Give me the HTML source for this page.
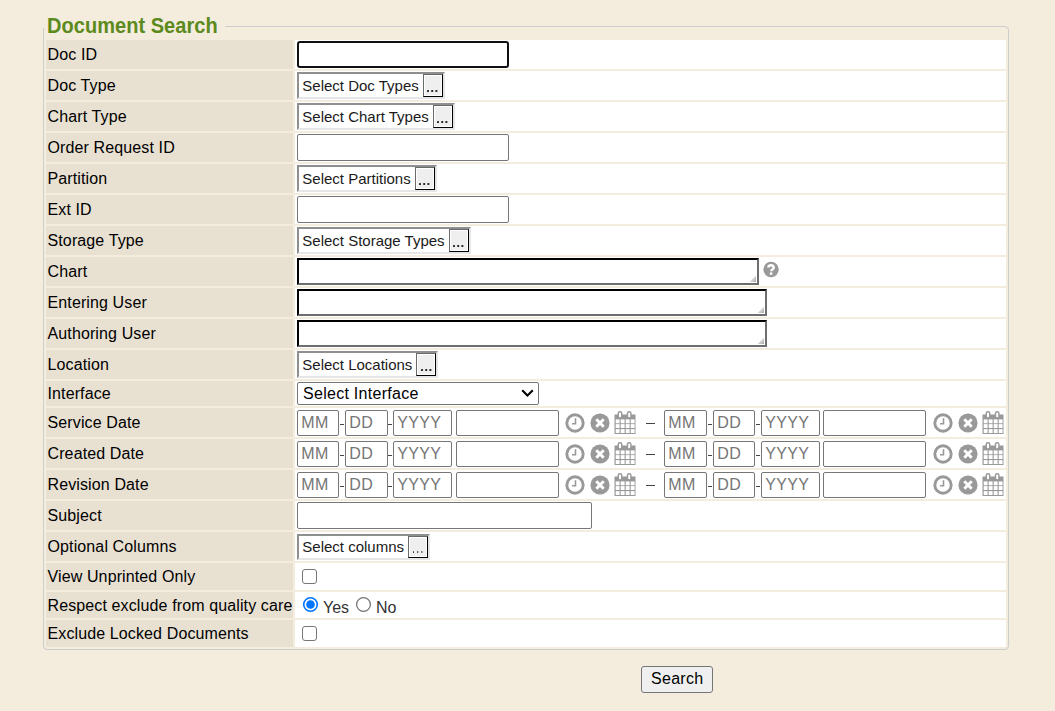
<!DOCTYPE html><html><head><meta charset="utf-8"><title>Document Search</title><style>
*{box-sizing:border-box;margin:0;padding:0}
html,body{width:1055px;height:711px;overflow:hidden;background:#f4ecdd;font-family:"Liberation Sans",sans-serif;font-size:16px;color:#000}
.a{position:absolute}
.fs{position:absolute;left:43px;top:26px;width:966px;height:624px;border:1px solid #cdcdcd;border-radius:4px}
.lgcover{position:absolute;left:41px;top:18px;width:184px;height:10px;background:#f4ecdd}
.lg{position:absolute;left:47px;top:15px;font-size:20px;font-weight:bold;color:#5c8a1c;line-height:23px;white-space:nowrap;letter-spacing:0.04px;transform:scaleY(1.06);transform-origin:0 18.4px}
.lc{position:absolute;left:46px;width:247px;background:#e8e1d2;white-space:nowrap;padding-left:1.5px;letter-spacing:0.12px}
.vc{position:absolute;left:295px;width:711px;background:#fff}
.inp{position:absolute;left:297px;height:27px;border:1px solid #767676;border-radius:2px;background:#fff}
.foc{border:2px solid #101010;border-radius:3px}
.sb{position:absolute;left:297px;height:27px;border:2px solid;border-color:#8f8f8f #e6e6e6 #e6e6e6 #8f8f8f;background:#fff;font-size:15px;line-height:23px;padding-left:3.3px;white-space:nowrap;color:#1a1a1a}
.sb span{display:inline-block;vertical-align:top}
.btn{position:absolute;top:0px;right:0px;width:20px;height:23px;background:#efefef;border:1px solid;border-color:#6a6a6a #000 #000 #6a6a6a;box-shadow:inset 0 0 0 1px #fff}
.dots{position:absolute;left:3.6px;width:1.8px;height:1.8px;background:#2a2a2a;border-radius:0.5px;box-shadow:4.2px 0 #2a2a2a,8.4px 0 #2a2a2a}
.ta{position:absolute;left:297px;height:27px;border:2px solid;border-color:#000 #6e6e6e #6e6e6e #000;background:#fff}
.grip{position:absolute;right:1px;bottom:1px;width:6px;height:6px;background:linear-gradient(135deg,transparent 49%,#d8d8d8 50%,#a8a8a8 100%)}
.sel{position:absolute;left:297px;top:382px;width:242px;height:23px;border:1px solid #767676;border-radius:2px;background:#fff;line-height:21px;padding-left:5px;letter-spacing:0.28px}
.di{position:absolute;height:26px;border:1px solid #767676;border-radius:2px;background:#fff;color:#757575;line-height:24px;padding-left:3.3px;letter-spacing:0.35px}
.dash{position:absolute;width:4px;height:1px;background:#444}
.cb{position:absolute;left:302px;width:15px;height:15px;border:1.3px solid #767676;border-radius:3px;background:#fff}
.srch{position:absolute;left:641px;top:666px;width:72px;height:27px;border:1px solid #767676;border-radius:3px;background:#efefef;text-align:center;line-height:23px;letter-spacing:0.3px;padding-left:0.5px}
</style></head><body>
<div class="fs"></div><div class="lgcover"></div><div class="lg">Document Search</div>
<div class="lc" style="top:40px;height:29px;line-height:29px">Doc ID</div>
<div class="vc" style="top:40px;height:29px"></div>
<div class="inp foc" style="top:41px;width:212px"></div>
<div class="lc" style="top:71px;height:29px;line-height:29px">Doc Type</div>
<div class="vc" style="top:71px;height:29px"></div>
<div class="sb" style="top:72px;height:27px;line-height:23px"><span class="t">Select Doc Types</span><span style="position:relative;width:20px;height:23px;margin-left:4px"><i class="btn" style="height:23px"><i class="dots" style="top:14.8px"></i></i></span></div>
<div class="lc" style="top:102px;height:29px;line-height:29px">Chart Type</div>
<div class="vc" style="top:102px;height:29px"></div>
<div class="sb" style="top:103px;height:27px;line-height:23px"><span class="t">Select Chart Types</span><span style="position:relative;width:20px;height:23px;margin-left:4px"><i class="btn" style="height:23px"><i class="dots" style="top:14.8px"></i></i></span></div>
<div class="lc" style="top:133px;height:29px;line-height:29px">Order Request ID</div>
<div class="vc" style="top:133px;height:29px"></div>
<div class="inp" style="top:134px;width:212px"></div>
<div class="lc" style="top:164px;height:29px;line-height:29px">Partition</div>
<div class="vc" style="top:164px;height:29px"></div>
<div class="sb" style="top:165px;height:27px;line-height:23px"><span class="t">Select Partitions</span><span style="position:relative;width:20px;height:23px;margin-left:4px"><i class="btn" style="height:23px"><i class="dots" style="top:14.8px"></i></i></span></div>
<div class="lc" style="top:195px;height:29px;line-height:29px">Ext ID</div>
<div class="vc" style="top:195px;height:29px"></div>
<div class="inp" style="top:196px;width:212px"></div>
<div class="lc" style="top:226px;height:29px;line-height:29px">Storage Type</div>
<div class="vc" style="top:226px;height:29px"></div>
<div class="sb" style="top:227px;height:27px;line-height:23px"><span class="t">Select Storage Types</span><span style="position:relative;width:20px;height:23px;margin-left:4px"><i class="btn" style="height:23px"><i class="dots" style="top:14.8px"></i></i></span></div>
<div class="lc" style="top:257px;height:29px;line-height:29px">Chart</div>
<div class="vc" style="top:257px;height:29px"></div>
<div class="ta" style="top:258px;width:462px"><i class="grip"></i></div>
<svg class="a" style="left:760px;top:259px" width="22" height="22" viewBox="-2.5 -2 22 22"><circle cx="8.55" cy="8.5" r="7.7" fill="#999"/><path d="M5.9 6.5C5.9 5 7.1 4.2 8.5 4.2S11.2 5 11.2 6.6C11.2 8.3 8.8 8.4 8.8 10.3" fill="none" stroke="#fff" stroke-width="2.5"/><rect x="7.35" y="11.4" width="2.5" height="2.4" fill="#fff"/></svg>
<div class="lc" style="top:288px;height:29px;line-height:29px">Entering User</div>
<div class="vc" style="top:288px;height:29px"></div>
<div class="ta" style="top:289px;width:470px"><i class="grip"></i></div>
<div class="lc" style="top:319px;height:29px;line-height:29px">Authoring User</div>
<div class="vc" style="top:319px;height:29px"></div>
<div class="ta" style="top:320px;width:470px"><i class="grip"></i></div>
<div class="lc" style="top:350px;height:29px;line-height:29px">Location</div>
<div class="vc" style="top:350px;height:29px"></div>
<div class="sb" style="top:351px;height:27px;line-height:23px"><span class="t">Select Locations</span><span style="position:relative;width:20px;height:23px;margin-left:4px"><i class="btn" style="height:23px"><i class="dots" style="top:14.8px"></i></i></span></div>
<div class="lc" style="top:381px;height:25px;line-height:25px">Interface</div>
<div class="vc" style="top:381px;height:25px"></div>
<div class="sel">Select Interface<svg class="a" style="left:222.5px;top:6.2px" width="13" height="9" viewBox="0 0 13 9"><path d="M1.2 1.2L6.5 6.5L11.8 1.2" fill="none" stroke="#000" stroke-width="2"/></svg></div>
<div class="lc" style="top:408px;height:29px;line-height:29px">Service Date</div>
<div class="vc" style="top:408px;height:29px"></div>
<div class="di" style="left:297px;top:410px;width:42px">MM</div>
<div class="dash" style="left:340px;top:424px"></div>
<div class="di" style="left:345px;top:410px;width:43px">DD</div>
<div class="dash" style="left:388px;top:424px"></div>
<div class="di" style="left:393px;top:410px;width:59px">YYYY</div>
<div class="di" style="left:456px;top:410px;width:103px"></div>
<svg class="a" style="left:565px;top:413px" width="20" height="20" viewBox="0 0 20 20"><circle cx="10" cy="10" r="8.2" fill="none" stroke="#999" stroke-width="2.9"/><path d="M10.5 5.2V10.8H7" fill="none" stroke="#999" stroke-width="1.6"/></svg>
<svg class="a" style="left:590px;top:413px" width="20" height="20" viewBox="0 0 20 20"><circle cx="10" cy="10" r="9.6" fill="#999"/><path d="M6.3 6.3L13.7 13.7M13.7 6.3L6.3 13.7" stroke="#fff" stroke-width="2.9"/></svg>
<svg class="a" style="left:614px;top:411px" width="22" height="24" viewBox="0 0 22 24"><rect x="0.5" y="3.5" width="21" height="19.5" fill="#999"/><rect x="1.7" y="8.4" width="3.9" height="3.9" fill="#fff"/><rect x="1.7" y="13.1" width="3.9" height="3.9" fill="#fff"/><rect x="1.7" y="18.1" width="3.9" height="3.9" fill="#fff"/><rect x="6.7" y="8.4" width="3.9" height="3.9" fill="#fff"/><rect x="6.7" y="13.1" width="3.9" height="3.9" fill="#fff"/><rect x="6.7" y="18.1" width="3.9" height="3.9" fill="#fff"/><rect x="11.7" y="8.4" width="3.9" height="3.9" fill="#fff"/><rect x="11.7" y="13.1" width="3.9" height="3.9" fill="#fff"/><rect x="11.7" y="18.1" width="3.9" height="3.9" fill="#fff"/><rect x="16.7" y="8.4" width="3.9" height="3.9" fill="#fff"/><rect x="16.7" y="13.1" width="3.9" height="3.9" fill="#fff"/><rect x="16.7" y="18.1" width="3.9" height="3.9" fill="#fff"/><rect x="3.6" y="0" width="4.8" height="7" rx="2.2" fill="#999"/><rect x="5.0" y="1.5" width="2" height="4.8" rx="0.8" fill="#fff"/><rect x="12.8" y="0" width="4.8" height="7" rx="2.2" fill="#999"/><rect x="14.200000000000001" y="1.5" width="2" height="4.8" rx="0.8" fill="#fff"/></svg>
<div class="di" style="left:664px;top:410px;width:43px">MM</div>
<div class="dash" style="left:708px;top:424px"></div>
<div class="di" style="left:713px;top:410px;width:42px">DD</div>
<div class="dash" style="left:756px;top:424px"></div>
<div class="di" style="left:761px;top:410px;width:59px">YYYY</div>
<div class="di" style="left:823px;top:410px;width:103px"></div>
<svg class="a" style="left:933px;top:413px" width="20" height="20" viewBox="0 0 20 20"><circle cx="10" cy="10" r="8.2" fill="none" stroke="#999" stroke-width="2.9"/><path d="M10.5 5.2V10.8H7" fill="none" stroke="#999" stroke-width="1.6"/></svg>
<svg class="a" style="left:958px;top:413px" width="20" height="20" viewBox="0 0 20 20"><circle cx="10" cy="10" r="9.6" fill="#999"/><path d="M6.3 6.3L13.7 13.7M13.7 6.3L6.3 13.7" stroke="#fff" stroke-width="2.9"/></svg>
<svg class="a" style="left:982px;top:411px" width="22" height="24" viewBox="0 0 22 24"><rect x="0.5" y="3.5" width="21" height="19.5" fill="#999"/><rect x="1.7" y="8.4" width="3.9" height="3.9" fill="#fff"/><rect x="1.7" y="13.1" width="3.9" height="3.9" fill="#fff"/><rect x="1.7" y="18.1" width="3.9" height="3.9" fill="#fff"/><rect x="6.7" y="8.4" width="3.9" height="3.9" fill="#fff"/><rect x="6.7" y="13.1" width="3.9" height="3.9" fill="#fff"/><rect x="6.7" y="18.1" width="3.9" height="3.9" fill="#fff"/><rect x="11.7" y="8.4" width="3.9" height="3.9" fill="#fff"/><rect x="11.7" y="13.1" width="3.9" height="3.9" fill="#fff"/><rect x="11.7" y="18.1" width="3.9" height="3.9" fill="#fff"/><rect x="16.7" y="8.4" width="3.9" height="3.9" fill="#fff"/><rect x="16.7" y="13.1" width="3.9" height="3.9" fill="#fff"/><rect x="16.7" y="18.1" width="3.9" height="3.9" fill="#fff"/><rect x="3.6" y="0" width="4.8" height="7" rx="2.2" fill="#999"/><rect x="5.0" y="1.5" width="2" height="4.8" rx="0.8" fill="#fff"/><rect x="12.8" y="0" width="4.8" height="7" rx="2.2" fill="#999"/><rect x="14.200000000000001" y="1.5" width="2" height="4.8" rx="0.8" fill="#fff"/></svg>
<div class="a" style="left:646px;top:423px;width:9px;height:1px;background:#444"></div>
<div class="lc" style="top:439px;height:29px;line-height:29px">Created Date</div>
<div class="vc" style="top:439px;height:29px"></div>
<div class="di" style="left:297px;top:441px;width:42px">MM</div>
<div class="dash" style="left:340px;top:455px"></div>
<div class="di" style="left:345px;top:441px;width:43px">DD</div>
<div class="dash" style="left:388px;top:455px"></div>
<div class="di" style="left:393px;top:441px;width:59px">YYYY</div>
<div class="di" style="left:456px;top:441px;width:103px"></div>
<svg class="a" style="left:565px;top:444px" width="20" height="20" viewBox="0 0 20 20"><circle cx="10" cy="10" r="8.2" fill="none" stroke="#999" stroke-width="2.9"/><path d="M10.5 5.2V10.8H7" fill="none" stroke="#999" stroke-width="1.6"/></svg>
<svg class="a" style="left:590px;top:444px" width="20" height="20" viewBox="0 0 20 20"><circle cx="10" cy="10" r="9.6" fill="#999"/><path d="M6.3 6.3L13.7 13.7M13.7 6.3L6.3 13.7" stroke="#fff" stroke-width="2.9"/></svg>
<svg class="a" style="left:614px;top:442px" width="22" height="24" viewBox="0 0 22 24"><rect x="0.5" y="3.5" width="21" height="19.5" fill="#999"/><rect x="1.7" y="8.4" width="3.9" height="3.9" fill="#fff"/><rect x="1.7" y="13.1" width="3.9" height="3.9" fill="#fff"/><rect x="1.7" y="18.1" width="3.9" height="3.9" fill="#fff"/><rect x="6.7" y="8.4" width="3.9" height="3.9" fill="#fff"/><rect x="6.7" y="13.1" width="3.9" height="3.9" fill="#fff"/><rect x="6.7" y="18.1" width="3.9" height="3.9" fill="#fff"/><rect x="11.7" y="8.4" width="3.9" height="3.9" fill="#fff"/><rect x="11.7" y="13.1" width="3.9" height="3.9" fill="#fff"/><rect x="11.7" y="18.1" width="3.9" height="3.9" fill="#fff"/><rect x="16.7" y="8.4" width="3.9" height="3.9" fill="#fff"/><rect x="16.7" y="13.1" width="3.9" height="3.9" fill="#fff"/><rect x="16.7" y="18.1" width="3.9" height="3.9" fill="#fff"/><rect x="3.6" y="0" width="4.8" height="7" rx="2.2" fill="#999"/><rect x="5.0" y="1.5" width="2" height="4.8" rx="0.8" fill="#fff"/><rect x="12.8" y="0" width="4.8" height="7" rx="2.2" fill="#999"/><rect x="14.200000000000001" y="1.5" width="2" height="4.8" rx="0.8" fill="#fff"/></svg>
<div class="di" style="left:664px;top:441px;width:43px">MM</div>
<div class="dash" style="left:708px;top:455px"></div>
<div class="di" style="left:713px;top:441px;width:42px">DD</div>
<div class="dash" style="left:756px;top:455px"></div>
<div class="di" style="left:761px;top:441px;width:59px">YYYY</div>
<div class="di" style="left:823px;top:441px;width:103px"></div>
<svg class="a" style="left:933px;top:444px" width="20" height="20" viewBox="0 0 20 20"><circle cx="10" cy="10" r="8.2" fill="none" stroke="#999" stroke-width="2.9"/><path d="M10.5 5.2V10.8H7" fill="none" stroke="#999" stroke-width="1.6"/></svg>
<svg class="a" style="left:958px;top:444px" width="20" height="20" viewBox="0 0 20 20"><circle cx="10" cy="10" r="9.6" fill="#999"/><path d="M6.3 6.3L13.7 13.7M13.7 6.3L6.3 13.7" stroke="#fff" stroke-width="2.9"/></svg>
<svg class="a" style="left:982px;top:442px" width="22" height="24" viewBox="0 0 22 24"><rect x="0.5" y="3.5" width="21" height="19.5" fill="#999"/><rect x="1.7" y="8.4" width="3.9" height="3.9" fill="#fff"/><rect x="1.7" y="13.1" width="3.9" height="3.9" fill="#fff"/><rect x="1.7" y="18.1" width="3.9" height="3.9" fill="#fff"/><rect x="6.7" y="8.4" width="3.9" height="3.9" fill="#fff"/><rect x="6.7" y="13.1" width="3.9" height="3.9" fill="#fff"/><rect x="6.7" y="18.1" width="3.9" height="3.9" fill="#fff"/><rect x="11.7" y="8.4" width="3.9" height="3.9" fill="#fff"/><rect x="11.7" y="13.1" width="3.9" height="3.9" fill="#fff"/><rect x="11.7" y="18.1" width="3.9" height="3.9" fill="#fff"/><rect x="16.7" y="8.4" width="3.9" height="3.9" fill="#fff"/><rect x="16.7" y="13.1" width="3.9" height="3.9" fill="#fff"/><rect x="16.7" y="18.1" width="3.9" height="3.9" fill="#fff"/><rect x="3.6" y="0" width="4.8" height="7" rx="2.2" fill="#999"/><rect x="5.0" y="1.5" width="2" height="4.8" rx="0.8" fill="#fff"/><rect x="12.8" y="0" width="4.8" height="7" rx="2.2" fill="#999"/><rect x="14.200000000000001" y="1.5" width="2" height="4.8" rx="0.8" fill="#fff"/></svg>
<div class="a" style="left:646px;top:454px;width:9px;height:1px;background:#444"></div>
<div class="lc" style="top:470px;height:29px;line-height:29px">Revision Date</div>
<div class="vc" style="top:470px;height:29px"></div>
<div class="di" style="left:297px;top:472px;width:42px">MM</div>
<div class="dash" style="left:340px;top:486px"></div>
<div class="di" style="left:345px;top:472px;width:43px">DD</div>
<div class="dash" style="left:388px;top:486px"></div>
<div class="di" style="left:393px;top:472px;width:59px">YYYY</div>
<div class="di" style="left:456px;top:472px;width:103px"></div>
<svg class="a" style="left:565px;top:475px" width="20" height="20" viewBox="0 0 20 20"><circle cx="10" cy="10" r="8.2" fill="none" stroke="#999" stroke-width="2.9"/><path d="M10.5 5.2V10.8H7" fill="none" stroke="#999" stroke-width="1.6"/></svg>
<svg class="a" style="left:590px;top:475px" width="20" height="20" viewBox="0 0 20 20"><circle cx="10" cy="10" r="9.6" fill="#999"/><path d="M6.3 6.3L13.7 13.7M13.7 6.3L6.3 13.7" stroke="#fff" stroke-width="2.9"/></svg>
<svg class="a" style="left:614px;top:473px" width="22" height="24" viewBox="0 0 22 24"><rect x="0.5" y="3.5" width="21" height="19.5" fill="#999"/><rect x="1.7" y="8.4" width="3.9" height="3.9" fill="#fff"/><rect x="1.7" y="13.1" width="3.9" height="3.9" fill="#fff"/><rect x="1.7" y="18.1" width="3.9" height="3.9" fill="#fff"/><rect x="6.7" y="8.4" width="3.9" height="3.9" fill="#fff"/><rect x="6.7" y="13.1" width="3.9" height="3.9" fill="#fff"/><rect x="6.7" y="18.1" width="3.9" height="3.9" fill="#fff"/><rect x="11.7" y="8.4" width="3.9" height="3.9" fill="#fff"/><rect x="11.7" y="13.1" width="3.9" height="3.9" fill="#fff"/><rect x="11.7" y="18.1" width="3.9" height="3.9" fill="#fff"/><rect x="16.7" y="8.4" width="3.9" height="3.9" fill="#fff"/><rect x="16.7" y="13.1" width="3.9" height="3.9" fill="#fff"/><rect x="16.7" y="18.1" width="3.9" height="3.9" fill="#fff"/><rect x="3.6" y="0" width="4.8" height="7" rx="2.2" fill="#999"/><rect x="5.0" y="1.5" width="2" height="4.8" rx="0.8" fill="#fff"/><rect x="12.8" y="0" width="4.8" height="7" rx="2.2" fill="#999"/><rect x="14.200000000000001" y="1.5" width="2" height="4.8" rx="0.8" fill="#fff"/></svg>
<div class="di" style="left:664px;top:472px;width:43px">MM</div>
<div class="dash" style="left:708px;top:486px"></div>
<div class="di" style="left:713px;top:472px;width:42px">DD</div>
<div class="dash" style="left:756px;top:486px"></div>
<div class="di" style="left:761px;top:472px;width:59px">YYYY</div>
<div class="di" style="left:823px;top:472px;width:103px"></div>
<svg class="a" style="left:933px;top:475px" width="20" height="20" viewBox="0 0 20 20"><circle cx="10" cy="10" r="8.2" fill="none" stroke="#999" stroke-width="2.9"/><path d="M10.5 5.2V10.8H7" fill="none" stroke="#999" stroke-width="1.6"/></svg>
<svg class="a" style="left:958px;top:475px" width="20" height="20" viewBox="0 0 20 20"><circle cx="10" cy="10" r="9.6" fill="#999"/><path d="M6.3 6.3L13.7 13.7M13.7 6.3L6.3 13.7" stroke="#fff" stroke-width="2.9"/></svg>
<svg class="a" style="left:982px;top:473px" width="22" height="24" viewBox="0 0 22 24"><rect x="0.5" y="3.5" width="21" height="19.5" fill="#999"/><rect x="1.7" y="8.4" width="3.9" height="3.9" fill="#fff"/><rect x="1.7" y="13.1" width="3.9" height="3.9" fill="#fff"/><rect x="1.7" y="18.1" width="3.9" height="3.9" fill="#fff"/><rect x="6.7" y="8.4" width="3.9" height="3.9" fill="#fff"/><rect x="6.7" y="13.1" width="3.9" height="3.9" fill="#fff"/><rect x="6.7" y="18.1" width="3.9" height="3.9" fill="#fff"/><rect x="11.7" y="8.4" width="3.9" height="3.9" fill="#fff"/><rect x="11.7" y="13.1" width="3.9" height="3.9" fill="#fff"/><rect x="11.7" y="18.1" width="3.9" height="3.9" fill="#fff"/><rect x="16.7" y="8.4" width="3.9" height="3.9" fill="#fff"/><rect x="16.7" y="13.1" width="3.9" height="3.9" fill="#fff"/><rect x="16.7" y="18.1" width="3.9" height="3.9" fill="#fff"/><rect x="3.6" y="0" width="4.8" height="7" rx="2.2" fill="#999"/><rect x="5.0" y="1.5" width="2" height="4.8" rx="0.8" fill="#fff"/><rect x="12.8" y="0" width="4.8" height="7" rx="2.2" fill="#999"/><rect x="14.200000000000001" y="1.5" width="2" height="4.8" rx="0.8" fill="#fff"/></svg>
<div class="a" style="left:646px;top:485px;width:9px;height:1px;background:#444"></div>
<div class="lc" style="top:501px;height:29px;line-height:29px">Subject</div>
<div class="vc" style="top:501px;height:29px"></div>
<div class="inp" style="top:502px;width:295px"></div>
<div class="lc" style="top:532px;height:29px;line-height:29px">Optional Columns</div>
<div class="vc" style="top:532px;height:29px"></div>
<div class="sb" style="top:534px;height:26px;line-height:22px"><span class="t">Select columns</span><span style="position:relative;width:20px;height:22px;margin-left:4px"><i class="btn" style="height:22px"><i class="dots" style="top:13.8px"></i></i></span></div>
<div class="lc" style="top:563px;height:27px;line-height:27px">View Unprinted Only</div>
<div class="vc" style="top:563px;height:27px"></div>
<div class="cb" style="top:569px"></div>
<div class="lc" style="top:592px;height:26px;line-height:26px;padding-top:1px">Respect exclude from quality care</div>
<div class="vc" style="top:592px;height:26px"></div>
<svg class="a" style="left:302px;top:596px" width="17" height="17" viewBox="0 0 17 17"><circle cx="8.5" cy="8.5" r="6.8" fill="#fff" stroke="#0075ff" stroke-width="1.6"/><circle cx="8.5" cy="8.5" r="4.3" fill="#0075ff"/></svg>
<div class="a" style="left:323px;top:599px;line-height:18px;color:#333">Yes</div>
<svg class="a" style="left:355px;top:596px" width="17" height="17" viewBox="0 0 17 17"><circle cx="8.5" cy="8.5" r="6.9" fill="#fff" stroke="#767676" stroke-width="1.3"/></svg>
<div class="a" style="left:376px;top:599px;line-height:18px;color:#333">No</div>
<div class="lc" style="top:620px;height:27px;line-height:27px">Exclude Locked Documents</div>
<div class="vc" style="top:620px;height:27px"></div>
<div class="cb" style="top:626px"></div>
<div class="srch">Search</div>
</body></html>
